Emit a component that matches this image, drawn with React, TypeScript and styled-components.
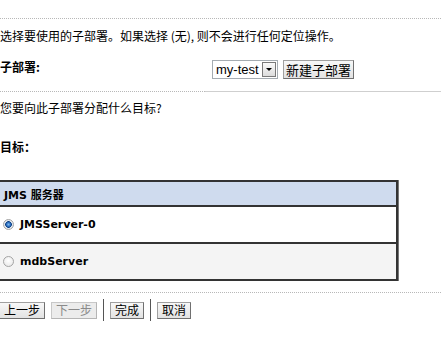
import React from "react";
import styled, { createGlobalStyle } from "styled-components";

const Global = createGlobalStyle`
  html, body { margin: 0; padding: 0; background: #ffffff; }
  body {
    font-family: "Noto Sans CJK SC", "DejaVu Sans", sans-serif;
    font-size: 12px;
    color: #000;
    width: 441px;
    height: 346px;
    overflow: hidden;
  }
`;

const Page = styled.div`
  padding-top: 18px;
  display: flex;
  flex-direction: column;
`;

const DottedRule = styled.div<{ $mt?: number }>`
  margin-top: ${(p) => p.$mt ?? 0}px;
  border-top: 1px dotted #b8b8b8;
  width: 441px;
`;

const SplitRule = styled.div`
  margin-top: 11px;
  display: flex;
  width: 441px;
`;

const RulePart = styled.div<{ $dotted?: boolean; $w?: number }>`
  height: 0;
  border-top: 1px ${(p) => (p.$dotted ? "dotted #b8b8b8" : "solid #cfcfcf")};
  ${(p) => (p.$w ? `width: ${p.$w}px;` : "flex: 1;")}
`;

const Text = styled.div<{ $mt: number; $bold?: boolean }>`
  margin-top: ${(p) => p.$mt}px;
  line-height: 16px;
  height: 16px;
  font-weight: ${(p) => (p.$bold ? 700 : 400)};
  white-space: nowrap;
`;

const FieldRow = styled.div`
  margin-top: 15px;
  display: flex;
  align-items: flex-start;
  height: 21px;
`;

const Label = styled.div`
  width: 212px;
  line-height: 16px;
  font-weight: 700;
`;

const Controls = styled.div`
  margin-top: 1px;
  display: flex;
  gap: 5px;
`;

const Select = styled.div`
  width: 66px;
  height: 19px;
  box-sizing: border-box;
  border: 1px solid #a5acb2;
  background: #fff;
  display: flex;
  align-items: center;
  justify-content: space-between;
`;

const SelectText = styled.span`
  font-family: "Liberation Sans", Arial, sans-serif;
  font-size: 13px;
  color: #000;
  padding-left: 3px;
  line-height: 17px;
`;

const Arrow = styled.span`
  width: 14px;
  height: 15px;
  margin-right: 1px;
  box-sizing: border-box;
  border: 1px solid #7a7a7a;
  background: linear-gradient(#fafafa, #dcdcdc);
  display: flex;
  align-items: center;
  justify-content: center;
  &::after {
    content: "";
    border-left: 3px solid transparent;
    border-right: 3px solid transparent;
    border-top: 3px solid #000;
  }
`;

const Button = styled.button<{ $disabled?: boolean }>`
  font-family: "Noto Sans CJK SC", sans-serif;
  font-size: 12px;
  line-height: 14px;
  height: 17px;
  padding: 0 4px;
  margin: 0;
  box-sizing: border-box;
  border: 1px solid ${(p) => (p.$disabled ? "#b5b5b5" : "#707070")};
  border-top-color: ${(p) => (p.$disabled ? "#c8c8c8" : "#a0a0a0")};
  border-left-color: ${(p) => (p.$disabled ? "#c8c8c8" : "#a0a0a0")};
  background: ${(p) =>
    p.$disabled ? "#ececec" : "linear-gradient(#f8f8f8, #e2e2e2)"};
  color: ${(p) => (p.$disabled ? "#8a8a8a" : "#000")};
  cursor: default;
  white-space: nowrap;
`;

const BigButton = styled(Button)`
  height: 19px;
  width: 71px;
  padding: 0;
  font-size: 13px;
`;

const Table = styled.div`
  margin-top: 25px;
  width: 398px;
  box-sizing: border-box;
  border: 2px solid #333;
  border-left: none;
  box-shadow: 1px 0 0 #777;
`;

const HeadRow = styled.div`
  height: 23px;
  background: #cfdbee;
  border-bottom: 2px solid #333;
  display: flex;
  align-items: center;
  padding-left: 4px;
  font-family: "DejaVu Sans", "Noto Sans CJK SC", sans-serif;
  font-size: 11px;
  font-weight: 700;
`;

const Row = styled.div<{ $alt?: boolean; $last?: boolean }>`
  height: 35px;
  background: ${(p) => (p.$alt ? "#f4f4f4" : "#ffffff")};
  border-bottom: ${(p) => (p.$last ? "none" : "2px solid #333")};
  display: flex;
  align-items: center;
  padding-left: 3px;
  gap: 6px;
  font-family: "DejaVu Sans", sans-serif;
  font-size: 11px;
  font-weight: 700;
`;

const Radio = styled.input`
  appearance: none;
  margin: 0;
  width: 11px;
  height: 11px;
  border-radius: 50%;
  box-sizing: border-box;
  border: 1px solid #a4a4a4;
  background: radial-gradient(circle at 50% 40%, #ffffff 0%, #e4e4e4 100%);
  &:checked {
    background: radial-gradient(
      circle at 50% 50%,
      #7fb8ee 0,
      #2a6fc0 2px,
      #0e3d7e 3px,
      #dfe6ee 3.6px,
      #f4f4f4 100%
    );
  }
`;

const ButtonBar = styled.div`
  margin-top: 6px;
  display: flex;
  align-items: center;
  gap: 6px;
  margin-left: -1px;
`;

const Sep = styled.div`
  width: 1px;
  height: 22px;
  background: #555;
`;

export default function App() {
  return (
    <>
      <Global />
      <Page>
        <DottedRule />
        <Text $mt={9}>选择要使用的子部署。如果选择 (无), 则不会进行任何定位操作。</Text>
        <FieldRow>
          <Label>子部署:</Label>
          <Controls>
            <Select>
              <SelectText>my-test</SelectText>
              <Arrow />
            </Select>
            <BigButton>新建子部署</BigButton>
          </Controls>
        </FieldRow>
        <SplitRule>
          <RulePart $dotted $w={205} />
          <RulePart />
        </SplitRule>
        <Text $mt={8}>您要向此子部署分配什么目标?</Text>
        <Text $mt={23} $bold>
          目标：
        </Text>
        <Table>
          <HeadRow>JMS 服务器</HeadRow>
          <Row>
            <Radio type="radio" name="target" defaultChecked />
            JMSServer-0
          </Row>
          <Row $alt $last>
            <Radio type="radio" name="target" />
            mdbServer
          </Row>
        </Table>
        <DottedRule $mt={11} />
        <ButtonBar>
          <Button>上一步</Button>
          <Button $disabled>下一步</Button>
          <Sep />
          <Button>完成</Button>
          <Sep />
          <Button>取消</Button>
        </ButtonBar>
      </Page>
    </>
  );
}
